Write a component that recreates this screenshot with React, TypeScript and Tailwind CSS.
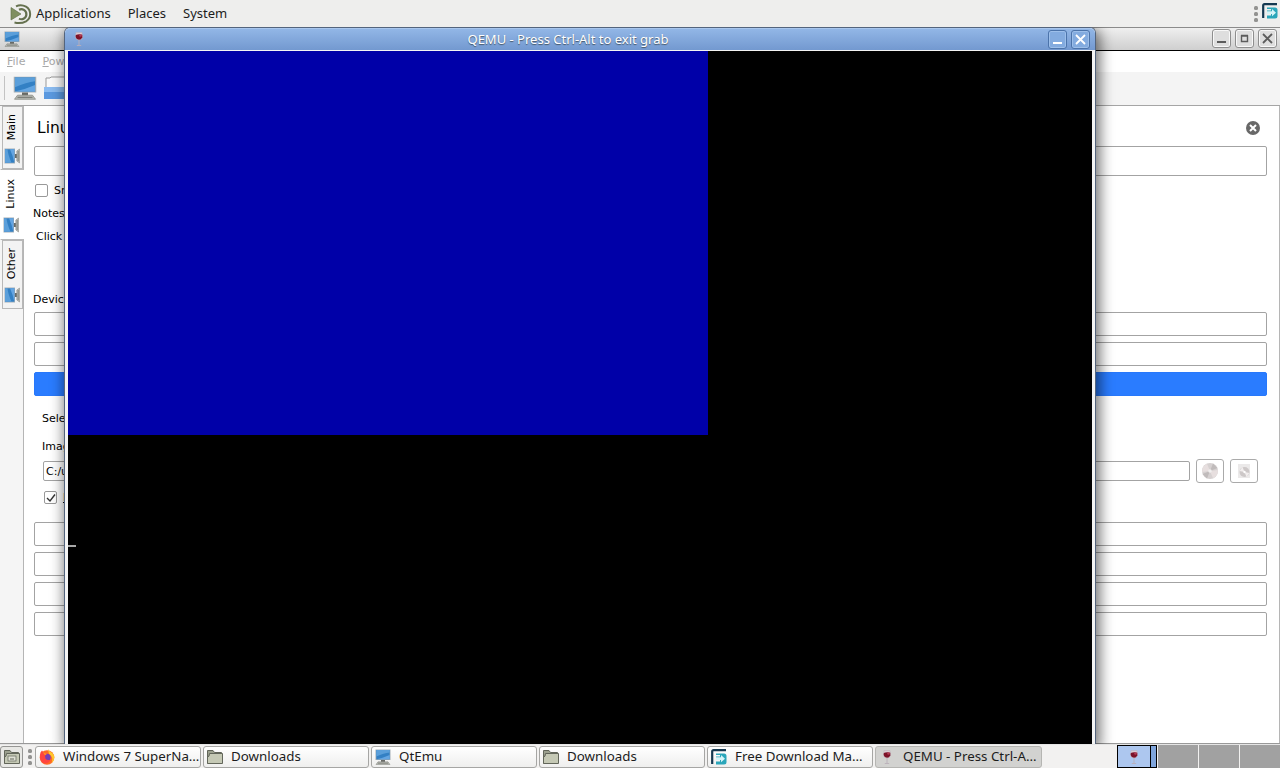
import type { ReactNode } from "react";

function Monitor({ className }: { className?: string }) {
  return (
    <svg viewBox="0 0 16 16" className={className}>
      <rect x="0.5" y="0.5" width="15" height="10.5" fill="#a3adb5" />
      <rect x="1.300" y="1" width="13.400" height="9.300" fill="#3380c4" />
      <path d="M1.300 1h13.400v2.500Q9 4 1.300 7.500z" fill="#5b9fda" />
      <path d="M1.300 10.300Q8 9 14.700 6v4.300z" fill="#64a5e2" />
      <path d="M6 11h4v2H6z" fill="#686a66" />
      <path d="M3 12.800h10l2 2.700H1z" fill="#b7b9b3" stroke="#83857f" strokeWidth="0.5" />
      <path d="M3 14.200h10" stroke="#73756f" strokeWidth="0.7" />
    </svg>
  );
}

function Mate() {
  return (
    <svg viewBox="0 0 22 22" className="h-[22px] w-[22px]" fill="none">
      <path d="M1 4.500 11 11 1 17z" fill="#7f8f60" stroke="#5c6b45" strokeWidth="0.6" />
      <path d="M6 3.300Q11 .8 16 3.700a8.500 8.500 0 0 1 0 14.600Q11 21 4.500 19.500" stroke="#65714f" strokeWidth="2" />
      <path d="M9 6.800a5 5 0 1 1 0 8.800" stroke="#65714f" strokeWidth="2.200" />
    </svg>
  );
}

function Fdm() {
  return (
    <svg viewBox="0 0 16 16" className="h-4 w-4 shrink-0" fill="none">
      <path d="M1.200 15V2.500Q1.200 1.200 2.500 1.200H15" stroke="#143850" strokeWidth="2.200" />
      <path d="M5 4.500h8q2.500 0 2.500 2.500v6q0 2.500-2.500 2.500H5v-3h4v-2H5V7.500h4V6H5z" fill="#2ba6ba" />
      <path d="M5 8.300h5V6l4 3.800-4 3.500v-2.300H5z" fill="#d5f4f8" />
    </svg>
  );
}

function Wine({ className }: { className?: string }) {
  return (
    <svg viewBox="0 0 16 16" className={`h-4 w-4 shrink-0 ${className ?? ""}`}>
      <path d="M5 1.500h6l.5 4.500Q11 9 8 9T4.500 6z" fill="#d9cdd5" stroke="#b9a8b2" strokeWidth="0.4" />
      <path d="M4.800 4q3-1.500 6.500-.3v2.500Q10.500 8.800 8 8.800T4.600 6z" fill="#7c1228" />
      <circle cx="9.500" cy="4.500" r="1.300" fill="#b43c55" />
      <path d="M8 9v5M5.800 14.500h4.400" stroke="#b9afb9" strokeWidth="0.9" />
    </svg>
  );
}

function Folder({ files }: { files?: boolean }) {
  return (
    <svg viewBox="0 0 16 16" className="h-4 w-4 shrink-0" stroke="#62665a">
      <path d="M.5 14.500v-13h5.500l1.500 2h7v3" fill="#9ca18f" />
      <path d="M2.500 4.500h13v10H.500V8q2 0 2-3.500z" fill="#c5c9b5" />
      {files && (
        <>
          <rect x="4" y="7" width="8" height="5" fill="#dfe1d5" strokeWidth="0.7" />
          <path d="M6 10h4" strokeWidth="1" />
        </>
      )}
    </svg>
  );
}

function Firefox() {
  return (
    <svg viewBox="0 0 16 16" className="h-4 w-4 shrink-0">
      <circle cx="8" cy="8.500" r="7.300" fill="#ff6a24" />
      <path d="M9 0q1 2 3.500 3.500 3 2 2.800 5.500-.3 3-2.800 5Q15 8 10 5z" fill="#ffc72b" />
      <circle cx="8" cy="8.500" r="3.700" fill="#7540b5" />
      <path d="M1 6q0-3 2-4.500L5 4l3 .8-2 2 .5 3q2 2 5 .7-1.500 4-5.500 4Q2 14 1 9z" fill="#ff453f" />
      <path d="M3 2 5 4l3 .8-2 1.500z" fill="#ff9b21" />
    </svg>
  );
}

function Handle({ className }: { className?: string }) {
  return (
    <svg viewBox="0 0 4 18" className={`h-[18px] w-1 shrink-0 ${className ?? ""}`} fill="#929290">
      <rect y="1" width="4" height="4" rx="1.500" />
      <rect y="7" width="4" height="4" rx="1.500" />
      <rect y="13" width="4" height="4" rx="1.500" />
    </svg>
  );
}

function TitleButton({ kind, active }: { kind: "min" | "max" | "close"; active?: boolean }) {
  return (
    <span
      className={`flex h-[19px] w-[19px] items-center justify-center rounded-[3px] border ${
        active
          ? "border-[#4b73aa] bg-[#83abdf] text-white shadow-[inset_0_0_0_1px_#9dbfea]"
          : "border-[#8e8e8e] bg-[#dedede] text-[#5c5c5c] shadow-[inset_0_0_0_1px_#f8f8f8]"
      }`}
    >
      <svg viewBox="0 0 13 13" className="h-[13px] w-[13px]" fill="none" stroke="currentColor">
        {kind === "min" && <path d="M2 10h9" strokeWidth="2" />}
        {kind === "max" && <path d="M3.500 4h6v5.500h-6zM3 3.500h7" strokeWidth="1.400" />}
        {kind === "close" && <path d="m2 2 9 9M11 2l-9 9" strokeWidth="1.800" />}
      </svg>
    </span>
  );
}

function Tab({ label, className }: { label: string; className: string }) {
  return (
    <div className={`flex flex-col items-center justify-end border border-[#b8b8b8] ${className}`}>
      <span className="rotate-180 text-[11px] leading-[14px] [writing-mode:vertical-rl]">{label}</span>
      <Monitor className="mt-[8px] h-4 w-4 shrink-0 -rotate-90" />
    </div>
  );
}

function Check({ checked }: { checked?: boolean }) {
  return (
    <span className="flex h-[13px] w-[13px] shrink-0 items-center justify-center rounded-[2px] border border-[#999] bg-white">
      {checked && (
        <svg viewBox="0 0 10 10" className="h-[10px] w-[10px]" fill="none" stroke="#333" strokeWidth="1.400">
          <path d="m1 5 3 3 5-6.500" />
        </svg>
      )}
    </span>
  );
}

function DiscButton({ small }: { small?: boolean }) {
  return (
    <span className="flex h-6 w-7 items-center justify-center rounded-[3px] border border-[#aaa] bg-white">
      <svg viewBox="0 0 18 18" className="h-[18px] w-[18px]">
        {small ? (
          <>
            <path d="M3 2h12v14H3z" fill="#ebe9e9" />
            <circle cx="9.500" cy="10" r="5" fill="#cdc8c8" />
            <path d="m9.500 10-5-1 3-4zM9.500 10l5 1-3 4z" fill="#f2eeee" />
            <circle cx="9.500" cy="10" r="1.200" fill="#fff" />
          </>
        ) : (
          <>
            <circle cx="9" cy="9" r="8" fill="#d6d1d1" />
            <path d="M9 9 1 10Q1 4 6 1.700zM9 9l8-1q0 6-5 8.300z" fill="#e7dfdf" />
            <path d="M9 9 12 1.500 16.500 6zM9 9l-3 7.500L1.500 12z" fill="#c0bbbb" />
            <circle cx="9" cy="9" r="1.800" fill="#f1efef" />
          </>
        )}
      </svg>
    </span>
  );
}

function Bar({ className }: { className?: string }) {
  return <div className={`h-6 shrink-0 rounded-[2px] border ${className ?? "border-[#a3a3a3] bg-white"}`} />;
}

function Task({ icon, label, active }: { icon: ReactNode; label: string; active?: boolean }) {
  return (
    <div
      className={`flex h-[22px] shrink-0 items-center gap-2 rounded-[3px] border pl-[3px] text-[13.33px] whitespace-nowrap ${
        active
          ? "w-[167px] border-[#b5b5b2] bg-[#d2d2d0]"
          : "w-[166px] border-[#a6a6a4] bg-linear-to-b from-white to-[#efefee]"
      }`}
    >
      {icon}
      <span>{label}</span>
    </div>
  );
}

function QtEmu() {
  return (
    <div className="flex h-full flex-col border-b border-[#999] bg-white font-['DejaVu_Sans',sans-serif] text-[11px] text-black">
      <div className="flex h-6 shrink-0 items-center border-t border-b border-t-[#8b8b8b] border-b-black bg-linear-to-b from-[#efefef] to-[#cfcfcf] pr-[3px] pb-px pl-1">
        <Monitor className="h-4 w-4" />
        <div className="ml-auto flex gap-1">
          <TitleButton kind="min" />
          <TitleButton kind="max" />
          <TitleButton kind="close" />
        </div>
      </div>
      <div className="flex h-[21px] shrink-0 items-center gap-[17px] pt-[2px] pl-[7px] text-[#a8a8a8]">
        <span><u>F</u>ile</span>
        <span><u>P</u>ower</span>
      </div>
      <div className="flex h-[34px] shrink-0 items-center gap-[6px] border-b border-[#a5a5a5] bg-[#f4f4f4] pb-[2px] pl-1">
        <div className="h-6 w-px bg-[#c3c3c3]" />
        <Monitor className="ml-[2px] h-6 w-6" />
        <svg viewBox="0 0 24 24" className="h-6 w-6">
          <path d="M3 12V2h4l1-1h15v12z" fill="#fafafa" stroke="#999" />
          <path d="M1 11h23v12H1z" fill="#5b99df" />
          <path d="M1 11h23v5H1z" fill="#8bbcf1" />
        </svg>
      </div>
      <div className="flex min-h-0 grow">
        <div className="flex w-6 shrink-0 flex-col border-r border-[#b5b5b5] bg-[#f5f5f5]">
          <Tab label="Main" className="ml-[2px] h-[63px] bg-[#f3f3f3] pr-[2px] pb-1" />
          <Tab label="Linux" className="-mr-px h-[71px] border-r-0 border-l-transparent bg-white pr-[3px] pb-[6px]" />
          <Tab label="Other" className="ml-[2px] h-[69px] bg-[#f3f3f3] pr-[2px] pb-[5px]" />
        </div>
        <div className="flex grow flex-col border-r border-[#b5b5b5] pr-3 pl-[10px]">
          <div className="flex h-10 shrink-0 items-center justify-between pt-1 pr-[7px] pl-[3px]">
            <span className="pt-px text-[15.5px]">Linux</span>
            <svg viewBox="0 0 14 14" className="h-[14px] w-[14px]" stroke="white" strokeWidth="2">
              <circle cx="7" cy="7" r="7" fill="#686868" stroke="none" />
              <path d="m4 4 6 6m0-6-6 6" />
            </svg>
          </div>
          <div className="h-[30px] shrink-0 rounded-[2px] border border-[#a3a3a3]" />
          <div className="flex h-[29px] shrink-0 items-center gap-[6px] pl-px">
            <Check />
            <span className="pt-[2px]">Snapshot</span>
          </div>
          <div className="-ml-px h-4 leading-[18px]">Notes</div>
          <div className="h-[30px] pl-[2px] leading-8">Click here to write notes</div>
          <div className="mt-10 mb-[5px] -ml-px h-4 leading-[18px]">Devices</div>
          <div className="flex flex-col gap-[6px]">
            <Bar />
            <Bar />
            <Bar className="border-[#2878fa] bg-[#2a7cff]" />
          </div>
          <div className="pr-[9px] pl-2">
            <div className="h-11 leading-[46px]">Select the boot image</div>
            <div className="h-3 leading-[14px]">Image</div>
            <div className="mt-[7px] flex items-center gap-[6px] pl-px">
              <div className="h-5 grow rounded-[2px] border border-[#a3a3a3] pl-[2px] leading-5">C:/users</div>
              <DiscButton />
              <DiscButton small />
            </div>
            <div className="flex h-[29px] items-center gap-[6px] pl-[2px]">
              <Check checked />
              <span className="pt-[2px]"><u>B</u>oot from image</span>
            </div>
          </div>
          <div className="mt-[10px] flex flex-col gap-[6px]">
            <Bar />
            <Bar />
            <Bar />
            <Bar />
          </div>
        </div>
      </div>
    </div>
  );
}

function Qemu() {
  return (
    <div className="absolute top-0 left-[64px] flex h-[717px] w-[1032px] flex-col rounded-t-[6px] border-x border-t border-[#53647d] bg-[#f4f4f4] shadow-[2px_4px_14px_2px_rgba(0,0,0,0.55)]">
      <div className="flex h-[22px] shrink-0 items-center rounded-t-[5px] border-t border-[#a8c6ee] bg-linear-to-b from-[#92b6e6] to-[#7399d0] pr-[5px] pl-[6px]">
        <Wine className="mb-[2px]" />
        <span className="grow pt-px pl-px text-center text-[13px] text-white [text-shadow:0_1px_1px_#456]">
          QEMU - Press Ctrl-Alt to exit grab
        </span>
        <div className="flex gap-1">
          <TitleButton kind="min" active />
          <TitleButton kind="close" active />
        </div>
      </div>
      <div className="mx-[3px] mt-px flex grow flex-col bg-black">
        <div className="h-[384px] w-[640px] bg-[#0000a8]" />
        <div className="mt-[110px] h-[2px] w-2 bg-[#a8a8a8]" />
      </div>
    </div>
  );
}

export default function App() {
  return (
    <main className="flex h-[768px] w-[1280px] flex-col overflow-hidden bg-[#f0f0ef] font-['Noto_Sans',sans-serif] text-[#1c1c1c]">
      <header className="flex h-[27px] shrink-0 items-center bg-[#eeeeed] pl-[10px] text-[13px]">
        <Mate />
        <span className="ml-1 pt-px">Applications</span>
        <span className="ml-[17px] pt-px">Places</span>
        <span className="ml-[17px] pt-px">System</span>
        <div className="mb-[2px] ml-auto flex items-start gap-1 pr-[2px]">
          <Handle className="mt-[2px]" />
          <Fdm />
        </div>
      </header>
      <section className="relative h-[717px] shrink-0 overflow-hidden">
        <QtEmu />
        <Qemu />
      </section>
      <footer className="flex h-6 shrink-0 items-center border-t border-[#e5e5e5] bg-[#f2f1f0]">
        <div className="flex h-[22px] w-[23px] items-center justify-center rounded-[3px] border border-[#969694] bg-[#e8e8e5]">
          <Folder files />
        </div>
        <Handle className="ml-[5px]" />
        <div className="ml-[3px] flex gap-[2px]">
          <Task icon={<Firefox />} label="Windows 7 SuperNa…" />
          <Task icon={<Folder />} label="Downloads" />
          <Task icon={<Monitor className="h-4 w-4 shrink-0" />} label="QtEmu" />
          <Task icon={<Folder />} label="Downloads" />
          <Task icon={<Fdm />} label="Free Download Ma…" />
          <Task icon={<Wine />} label="QEMU - Press Ctrl-A…" active />
        </div>
        <div className="ml-auto flex h-full gap-px">
          <div className="flex w-10 border border-black bg-[#7fa5dc]">
            <div className="flex w-[33px] items-center justify-center border-r border-black bg-[#adc7ef]">
              <Wine />
            </div>
          </div>
          <div className="w-10 bg-[#a1a1a1]" />
          <div className="w-10 bg-[#a1a1a1]" />
          <div className="w-10 bg-[#a1a1a1]" />
        </div>
      </footer>
    </main>
  );
}
